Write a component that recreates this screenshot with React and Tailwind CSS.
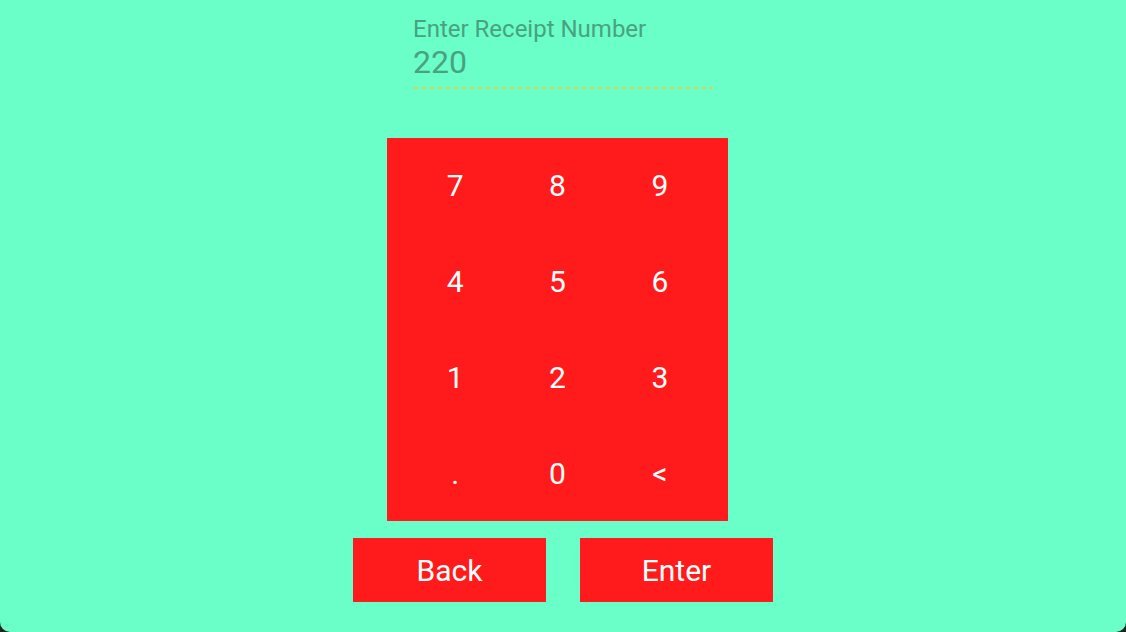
import React, { useState } from "react";

const keys = ["7", "8", "9", "4", "5", "6", "1", "2", "3", ".", "0", "<"];

const App = () => {
  const [value, setValue] = useState("220");

  const press = (k) => {
    if (k === "<") setValue((v) => v.slice(0, -1));
    else setValue((v) => v + k);
  };

  return (
    <div className="w-full h-[632px] bg-[#1f2421]" style={{ fontFamily: "Roboto, sans-serif" }}>
      <div className="h-full bg-[#6affc8] rounded-b-[10px] flex flex-col items-center pt-[15px]">
        <div className="w-[300px]">
          <div className="text-[24px] leading-[28px] text-[#49a27f]">Enter Receipt Number</div>
          <div className="text-[32px] leading-[38px] text-[#49a27f]">{value}</div>
          {/* dashed underline */}
          <div className="mt-[6px] h-[2px] bg-[linear-gradient(to_right,#d6d25c_5px,transparent_5px)] bg-[length:8px_2px]" />
        </div>

        <div className="mt-[49px] mr-[11px] w-[341px] h-[383px] bg-[#ff1b1b] px-[17px] grid grid-cols-3 grid-rows-4">
          {keys.map((k) => (
            <button
              key={k}
              onClick={() => press(k)}
              className="flex items-center justify-center text-white text-[30px]"
            >
              {k}
            </button>
          ))}
        </div>

        <div className="mt-[17px] flex gap-[34px]">
          <button className="w-[193px] h-[64px] bg-[#ff1b1b] text-white text-[30px]">Back</button>
          <button className="w-[193px] h-[64px] bg-[#ff1b1b] text-white text-[30px]">Enter</button>
        </div>
      </div>
    </div>
  );
};

export default App;
